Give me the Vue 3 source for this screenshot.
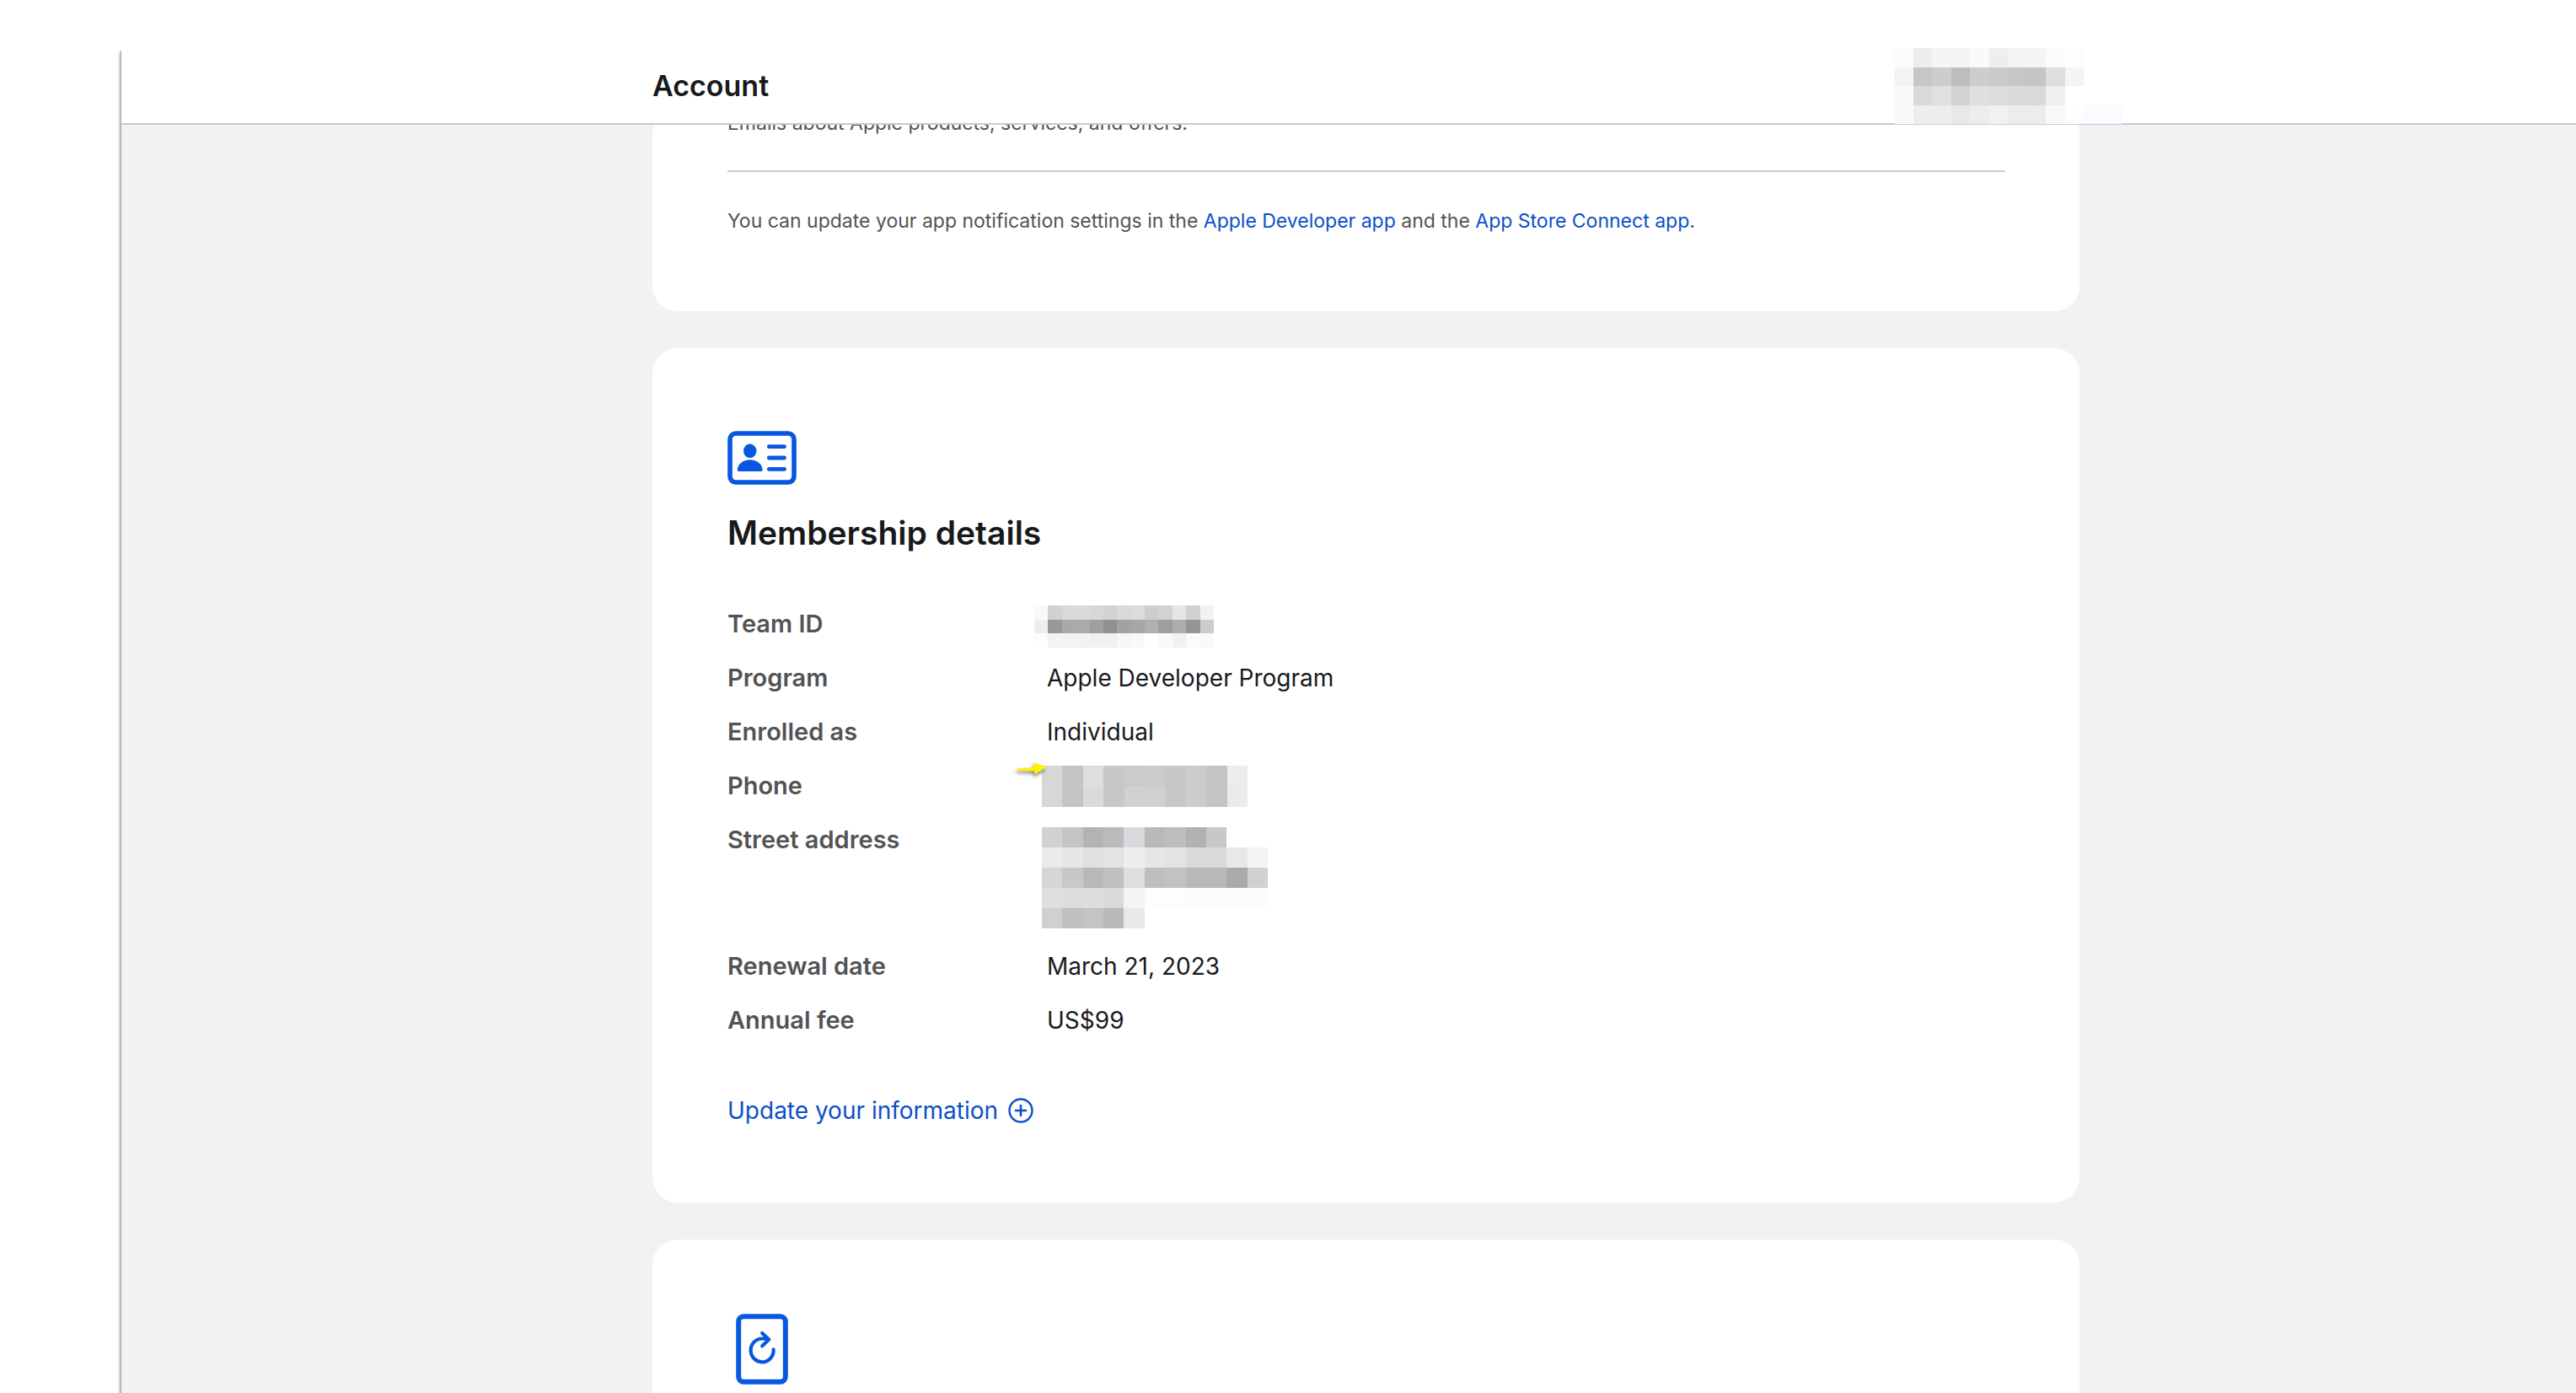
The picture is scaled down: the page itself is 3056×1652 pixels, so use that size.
<script setup>
const accountMosaic = {
  rows: [
    ['#fcfcfc', '#ededed', '#f5f5f5', '#f5f5f5', '#f9f9f9', '#eeeef0', '#f4f4f4', '#f4f4f4', '#fbfbfb', '#fdfdfd'],
    ['#f4f4f4', '#c6c6c6', '#cdcdcd', '#bbbebd', '#cdcdcd', '#cacaca', '#c6c6c6', '#c5c5c5', '#dedede', '#f4f4f4'],
    ['#f9f9f9', '#d9d9d9', '#e0e0e0', '#d3d3d3', '#dfdfdf', '#dcdcdc', '#dadada', '#d9d9d9', '#efefef', '#ffffff'],
    ['#fafafa', '#eeeeee', '#eeeeee', '#e8e8e8', '#ededed', '#f2f2f2', '#ececec', '#ececec', '#f9f9f9', '#fefefe', '#fafaff', '#fafaff'],
  ],
}
const teamMosaic = {
  rows: [
    ['#f9f9f9', '#d1d1d1', '#d9d9d9', '#dadada', '#d7d7d7', '#d2d2d2', '#d9d9d9', '#dcdcdc', '#cecece', '#d2d2d2', '#e6e6e8', '#d1d1d1', '#f2f2f2'],
    ['#eeeeee', '#989898', '#a9a9a9', '#aaaaaa', '#9e9fa1', '#909090', '#a2a2a5', '#a6a7a9', '#b0b0b0', '#9e9e9e', '#adadad', '#959595', '#cdcdcd'],
    ['#fdfdfd', '#f3f3f3', '#f3f3f3', '#f2f2f2', '#f0f0f0', '#f0f0f0', '#f7f7f7', '#f9f9f9', '#ffffff', '#f9f9f9', '#f0f0f0', '#fafafa', '#f9f9f9'],
  ],
}
const phoneMosaic = {
  rows: [
    ['#d7d7d7', '#c4c4c4', '#dedede', '#c7c7ca', '#cbcbcb', '#cccccc', '#c8c8c8', '#cccccc', '#c4c4c4', '#ededed'],
    ['#d7d7d7', '#c4c4c4', '#dadada', '#c7c7ca', '#d1d1d1', '#d1d1d1', '#c8c8cb', '#cccccc', '#c4c4c4', '#ebebee'],
  ],
}
const addressMosaic = {
  rows: [
    ['#d1d1d1', '#c4c4c4', '#b3b3b6', '#bbbbbb', '#d9d9dd', '#b9b9b9', '#bebebe', '#b2b2b5', '#c8c8c8'],
    ['#ebebeb', '#e6e6e9', '#e0e0e0', '#e3e3e3', '#eeeeee', '#e6e6e6', '#e3e3e3', '#d9d9dc', '#dadadd', '#e8e8e8', '#f3f3f3'],
    ['#d6d6d6', '#c8c8c8', '#b8b8b8', '#c0c0c0', '#dfdfdf', '#bebebe', '#c2c2c2', '#b9b9bc', '#b9b9b9', '#aaaaaa', '#d1d1d1'],
    ['#dfdfdf', '#dddddd', '#dddddd', '#d9d9d9', '#f4f4f4', '#fdfdfd', '#fdfdfd', '#fbfbfb', '#fbfbfb', '#fcfcfc', '#fcfcfc'],
    ['#d0d0d0', '#c0c0c0', '#c4c4c4', '#b8b8b8', '#e8e8e8'],
  ],
}

const details = [
  { label: 'Team ID', mosaic: teamMosaic, kind: 'team', cols: 13 },
  { label: 'Program', value: 'Apple Developer Program' },
  { label: 'Enrolled as', value: 'Individual' },
  { label: 'Phone', mosaic: phoneMosaic, kind: 'phone', cols: 10, pointer: true },
  { label: 'Street address', mosaic: addressMosaic, kind: 'address', cols: 11 },
  { label: 'Renewal date', value: 'March 21, 2023' },
  { label: 'Annual fee', value: 'US$99' },
]
</script>

<template>
  <div class="page">
    <div class="window">
      <header class="bar">
        <div class="column bar-inner">
          <h1>Account</h1>
          <svg class="account-name" viewBox="0 0 12 4" preserveAspectRatio="none" shape-rendering="crispEdges" role="img" aria-label="Hidden account name">
            <template v-for="(row, y) in accountMosaic.rows" :key="y">
              <rect v-for="(fill, x) in row" :key="x" :x="x" :y="y" width="1" height="1" :fill="fill" />
            </template>
          </svg>
        </div>
      </header>

      <main class="content">
        <div class="column">
          <section class="card emails">
            <p>Emails about Apple products, services, and offers.</p>
            <hr />
            <p>
              You can update your app notification settings in the <a href="#">Apple Developer app</a> and the
              <a href="#">App Store Connect app</a>.
            </p>
          </section>

          <section class="card">
            <div class="icon">
              <svg width="82" height="64" viewBox="0 0 82 64" fill="none" stroke="#0757e0" aria-hidden="true">
                <rect x="3" y="3" width="76" height="58" rx="7" stroke-width="5.6" />
                <ellipse cx="26.7" cy="23.8" rx="7.7" ry="8.3" fill="#0757e0" stroke="none" />
                <path d="M13.6 48c-1.3 0-1.9-.8-1.8-2.2C12.4 39.5 18.5 34.3 26.7 34.3S41 39.5 41.6 45.8c.1 1.4-.5 2.2-1.8 2.2z" fill="#0757e0" stroke="none" />
                <path d="M49.3 18.7h18.2M49.3 32h18.2M49.3 45.4h18.2" stroke-width="4.8" stroke-linecap="round" />
              </svg>
            </div>
            <h2>Membership details</h2>
            <dl>
              <template v-for="item in details" :key="item.label">
                <dt>{{ item.label }}</dt>
                <dd :class="item.kind">
                  {{ item.value }}
                  <svg v-if="item.mosaic" class="mosaic" :viewBox="`0 0 ${item.cols} ${item.mosaic.rows.length}`" preserveAspectRatio="none" shape-rendering="crispEdges" role="img" :aria-label="`Hidden ${item.label}`">
                    <template v-for="(row, y) in item.mosaic.rows" :key="y">
                      <rect v-for="(fill, x) in row" :key="x" :x="x" :y="y" width="1" height="1" :fill="fill" />
                    </template>
                  </svg>
                  <svg v-if="item.pointer" class="pointer" width="40" height="24" viewBox="0 0 40 24" aria-hidden="true">
                    <path d="M1 8.5 21.5 7 21.2 1 36.500 6.800 22.500 15.500 21.700 11.300 1.500 10.800z" fill="#fff200" />
                  </svg>
                </dd>
              </template>
            </dl>
            <a class="update" href="#">
              Update your information
              <svg width="30" height="30" viewBox="0 0 30 30" fill="none" stroke="currentColor" stroke-linecap="round" aria-hidden="true">
                <circle cx="15" cy="15" r="13.5" stroke-width="2.4" />
                <path d="M15 9v12M9 15h12" stroke-width="2.6" />
              </svg>
            </a>
          </section>

          <section class="card">
            <div class="icon">
              <svg width="62" height="84" viewBox="0 0 62 84" fill="none" stroke="#0757e0" stroke-linecap="round" stroke-linejoin="round" aria-hidden="true">
                <rect x="3.2" y="3.2" width="55.6" height="77.6" rx="6" stroke-width="6" />
                <path d="M44.6 42.3A13.5 13.9 0 1 1 31.2 29.500q4.500-.3 7 .7M31.200 23l8 7.600-8 7.600" stroke-width="4.200" />
              </svg>
            </div>
          </section>
        </div>
      </main>
    </div>
  </div>
</template>

<style>
body {
  margin: 0;
  background: #fff;
}
</style>

<style scoped>
.page {
  height: 100vh;
  box-sizing: border-box;
  padding: 58px 0 0 144px;
  overflow: hidden;
  font-family: Inter, 'Liberation Sans', sans-serif;
  font-size: 28px;
  line-height: 44px;
  color: #18191b;
}
.window {
  display: flex;
  flex-direction: column;
  height: 100%;
  margin-right: -41px;
  background: #f2f2f4;
  box-shadow: -1px 2px 0 #a9a9ab, -2px 4px 3px rgba(0, 0, 0, 0.35);
}
.column {
  width: min(1693px, 100% - 80px);
  margin: 0 auto;
}
.bar {
  background: #fff;
  border-bottom: 2px solid #c9c8cf;
}
.bar-inner {
  display: flex;
  justify-content: space-between;
  align-items: center;
  height: 88px;
}
h1,
h2 {
  margin: 0;
  font-weight: 600;
}
h1 {
  font-size: 34px;
}
.account-name {
  width: 270px;
  height: 90px;
  margin-right: -50px;
}
.content {
  flex: 1;
  min-height: 0;
  overflow: hidden;
}
.content .column {
  display: flex;
  flex-direction: column;
  gap: 44px;
}
.card {
  padding: 78px 88px 87px 89px;
  border-radius: 30px;
  background: #fff;
}
.emails {
  margin-top: -20px;
  padding-top: 0;
  padding-bottom: 89px;
  font-size: 23px;
  line-height: 36px;
  color: #535355;
}
.emails p {
  margin: 0;
}
.emails hr {
  height: 2px;
  margin: 38px 0 40px;
  border: 0;
  background: #cbcad1;
}
a {
  color: #0b50c7;
  text-decoration: none;
}
.icon {
  display: flex;
  align-items: center;
  justify-content: center;
  width: 82px;
  height: 104px;
}
h2 {
  margin-top: 13px;
  font-size: 39px;
  line-height: 48px;
}
dl {
  display: grid;
  grid-template-columns: 379px 1fr;
  row-gap: 20px;
  margin: 62px 0 63px;
}
dt {
  font-size: 29px;
  font-weight: 600;
  color: #535355;
}
dd {
  position: relative;
  min-height: 44px;
  margin: 0;
}
dd.address {
  min-height: 130px;
}
.mosaic {
  position: absolute;
  left: -6px;
  top: -2px;
  width: 244px;
  height: 49px;
}
.team .mosaic {
  left: -15px;
  top: 0;
  width: 213px;
  height: 50px;
}
.address .mosaic {
  top: 7px;
  width: 268px;
  height: 120px;
}
.pointer {
  position: absolute;
  left: -37px;
  top: -7px;
  filter: drop-shadow(-1px 3px 2px rgba(0, 0, 0, 0.5));
}
.update {
  display: flex;
  align-items: center;
  gap: 12px;
  width: fit-content;
}
</style>
